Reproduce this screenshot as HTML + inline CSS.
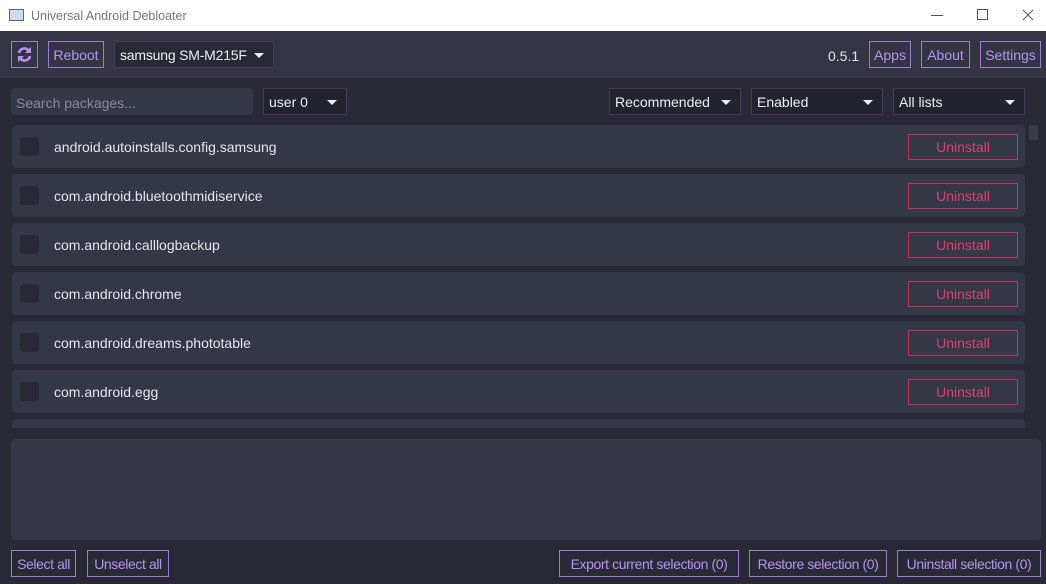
<!DOCTYPE html><html><head><style>
*{margin:0;padding:0;box-sizing:border-box}
body{width:1046px;height:584px;overflow:hidden;background:#282a36;font-family:"Liberation Sans",sans-serif;font-size:14px;color:#e6e6ea;position:relative}
.a{position:absolute}
.btn{position:absolute;border:1px solid #a07cd8;color:#b892f2;height:27px;line-height:27px;text-align:center;font-size:14px}
.sel{position:absolute;background:#22232e;border:1px solid #4a3a5e;height:27px;line-height:27px;padding-left:5px;color:#eee}
.sel:after{content:"";position:absolute;right:9px;top:11px;border-left:5px solid transparent;border-right:5px solid transparent;border-top:5px solid #eee}
.row{position:absolute;left:12px;width:1013px;height:43px;background:#343746;border-radius:4px}
.cb{position:absolute;left:8px;top:12px;width:19px;height:19px;background:#272935;border-radius:3px}
.row span{position:absolute;left:42px;top:14px}
.un{position:absolute;left:896px;top:9px;width:110px;height:26px;border:1px solid #c8305a;color:#e0406a;text-align:center;line-height:25px}
.bb{top:550px;height:27px;font-size:14px;letter-spacing:-0.4px}
</style></head><body>
<div class="a" style="left:0;top:0;width:1046px;height:31px;background:#fff;color:#777;font-size:12.5px">
<div class="a" style="left:9px;top:9px;width:15px;height:12px;border:1px solid #666;background:#cde"></div>
<div class="a" style="left:31px;top:9px">Universal Android Debloater</div>
<div class="a" style="left:931px;top:15px;width:12px;height:1px;background:#555"></div>
<div class="a" style="left:977px;top:9px;width:11px;height:11px;border:1px solid #555"></div>
<svg class="a" style="left:1022px;top:9px" width="12" height="12"><path d="M1 1L11 11M11 1L1 11" stroke="#555" stroke-width="1"/></svg>
</div>
<div class="a" style="left:0;top:31px;width:1046px;height:47px;background:#333542"></div>
<div class="btn" style="left:11px;top:41px;width:27px"></div>
<svg class="a" style="left:16px;top:46px" width="17" height="17" viewBox="0 0 17 17"><path d="M3 7A5.5 5.5 0 0 1 13 5" stroke="#b892f2" stroke-width="2.6" fill="none"/><path d="M14 10A5.5 5.5 0 0 1 4 12" stroke="#b892f2" stroke-width="2.6" fill="none"/><path d="M15 1V7H9Z" fill="#b892f2"/><path d="M2 16V10H8Z" fill="#b892f2"/></svg>
<div class="btn" style="left:48px;top:41px;width:56px">Reboot</div>
<div class="sel" style="left:114px;top:41px;width:160px;background:#272935;letter-spacing:-0.2px">samsung SM-M215F</div>
<div class="a" style="left:828px;top:48px">0.5.1</div>
<div class="btn" style="left:869px;top:41px;width:42px">Apps</div>
<div class="btn" style="left:921px;top:41px;width:49px">About</div>
<div class="btn" style="left:980px;top:41px;width:61px">Settings</div>
<div class="a" style="left:11px;top:88px;width:242px;height:27px;background:#343746;border-radius:4px;color:#8a8b98;padding:8px 5px;line-height:14px">Search packages...</div>
<div class="sel" style="left:263px;top:88px;width:84px">user 0</div>
<div class="sel" style="left:609px;top:88px;width:132px">Recommended</div>
<div class="sel" style="left:751px;top:88px;width:132px">Enabled</div>
<div class="sel" style="left:893px;top:88px;width:132px">All lists</div>
<div class="a" style="left:1029px;top:125px;width:9px;height:15px;background:#3a3c4a;border-radius:2px"></div>
<div class="a" style="left:0;top:125px;width:1046px;height:303px;overflow:hidden">
<div class="row" style="top:0"><div class="cb"></div><span>android.autoinstalls.config.samsung</span><div class="un">Uninstall</div></div>
<div class="row" style="top:49px"><div class="cb"></div><span>com.android.bluetoothmidiservice</span><div class="un">Uninstall</div></div>
<div class="row" style="top:98px"><div class="cb"></div><span>com.android.calllogbackup</span><div class="un">Uninstall</div></div>
<div class="row" style="top:147px"><div class="cb"></div><span>com.android.chrome</span><div class="un">Uninstall</div></div>
<div class="row" style="top:196px"><div class="cb"></div><span>com.android.dreams.phototable</span><div class="un">Uninstall</div></div>
<div class="row" style="top:245px"><div class="cb"></div><span>com.android.egg</span><div class="un">Uninstall</div></div>
<div class="row" style="top:294px"><div class="cb"></div><span></span><div class="un"></div></div>
</div>
<div class="a" style="left:11px;top:439px;width:1030px;height:101px;background:#363746;border-radius:4px"></div>
<div class="btn bb" style="left:11px;width:65px">Select all</div>
<div class="btn bb" style="left:87px;width:82px">Unselect all</div>
<div class="btn bb" style="left:559px;width:180px">Export current selection (0)</div>
<div class="btn bb" style="left:749px;width:138px">Restore selection (0)</div>
<div class="btn bb" style="left:897px;width:144px">Uninstall selection (0)</div>
</body></html>
